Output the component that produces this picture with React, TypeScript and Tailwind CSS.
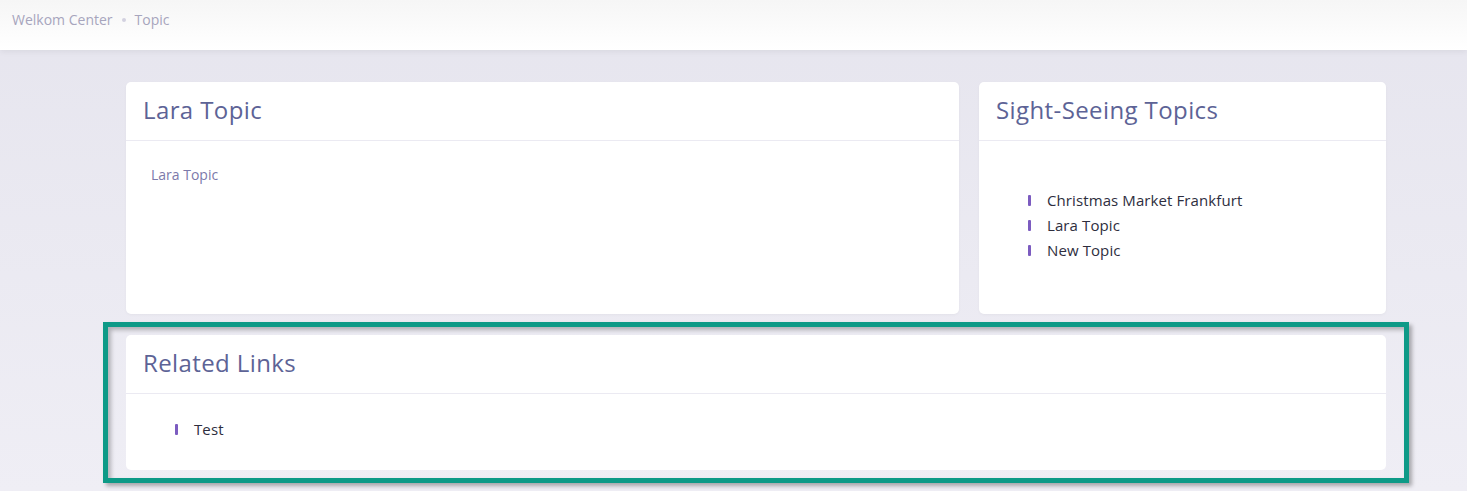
import React from "react";

const font = { fontFamily: '"Open Sans", "Noto Sans", sans-serif' };

function Marker() {
  return <span className="inline-block w-[3px] h-[11px] rounded-[1px] bg-[#7c5cc0]" />;
}

function Item({ text }: { text: string }) {
  return (
    <li className="flex items-center h-[25px]">
      <span className="w-[19px] flex items-center">
        <Marker />
      </span>
      <span className="text-[15px] tracking-[0.1px] text-[#2e2e3e]">{text}</span>
    </li>
  );
}

function CardHeader({ title }: { title: string }) {
  return (
    <div className="h-[59px] px-[17px] pb-[3px] flex items-center border-b border-[#ebeaf2]">
      <h2 className="text-[24px] leading-[30px] text-[#5d6396] font-medium tracking-[0.4px]">{title}</h2>
    </div>
  );
}

export default function App() {
  return (
    <div style={font} className="w-[1467px] h-[491px] overflow-hidden bg-gradient-to-b from-[#e6e5ee] to-[#efeef5]">
      <header className="h-[50px] bg-gradient-to-b from-[#f6f6f6] to-white shadow-[0_2px_6px_rgba(0,0,0,0.06)] flex items-start pt-[10px] px-[12px] gap-[9px] text-[14px] leading-[20px] text-[#a7a5bd] relative z-10">
        <span>Welkom Center</span>
        <span className="w-[4px] h-[4px] mt-[8px] rounded-full bg-[#d3d1e0]" />
        <span>Topic</span>
      </header>
      <main className="pl-[126px] pt-[32px] w-[1386px] box-content">
        <div className="flex gap-[20px] w-[1260px]">
          <section className="w-[833px] h-[232px] bg-white rounded-[5px] shadow-[0_1px_3px_rgba(0,0,0,0.04)]">
            <CardHeader title="Lara Topic" />
            <div className="px-[25px] pt-[23px] text-[14px] text-[#7c79aa]">Lara Topic</div>
          </section>
          <section className="w-[407px] h-[232px] bg-white rounded-[5px] shadow-[0_1px_3px_rgba(0,0,0,0.04)]">
            <CardHeader title="Sight-Seeing Topics" />
            <ul className="pl-[49px] pt-[47px]">
              <Item text="Christmas Market Frankfurt" />
              <Item text="Lara Topic" />
              <Item text="New Topic" />
            </ul>
          </section>
        </div>
        <div className="-ml-[23px] mt-[8px] w-[1306px] h-[161px] border-[5px] border-[#0d9a87] shadow-[3px_3px_4px_rgba(0,0,0,0.3),inset_3px_3px_4px_rgba(0,0,0,0.25)] pl-[18px] pt-[8px]">
          <section className="w-[1260px] h-[135px] bg-white rounded-[5px]">
            <CardHeader title="Related Links" />
            <ul className="pl-[49px] pt-[23px]">
              <Item text="Test" />
            </ul>
          </section>
        </div>
      </main>
    </div>
  );
}
